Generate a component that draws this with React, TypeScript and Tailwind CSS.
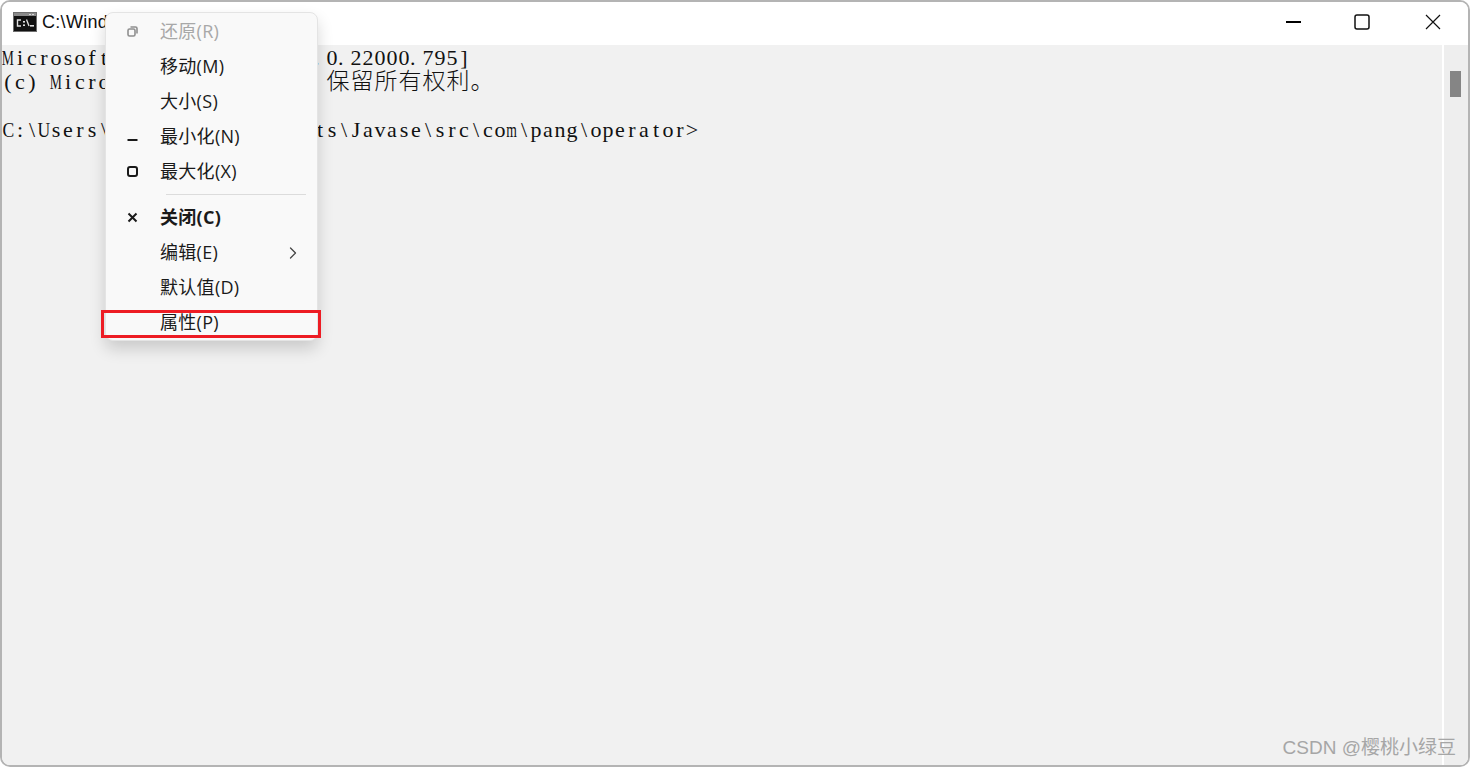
import { ReactNode } from "react";
import { ChevronRight } from "lucide-react";

const uiFont = "'Open Sans', 'Noto Sans CJK SC', sans-serif";

// console text sits on a fixed 12px grid, CJK glyphs take two cells
function ConsoleLine({ text }: { text: string }) {
  return (
    <div className="flex h-[24px] whitespace-pre font-['Liberation_Serif','Noto_Sans_CJK_SC',serif] text-[22px] leading-[24px] text-[#111]">
      {Array.from(text).map((ch, i) => {
        if (ch.charCodeAt(0) > 255) {
          return (
            <span key={i} className="w-[24px] shrink-0 text-center text-[23px] font-light">
              {ch}
            </span>
          );
        }
        let squeeze = "";
        if ("MWmw".includes(ch)) squeeze = "scale-x-[0.62]";
        else if ("CUDAP".includes(ch)) squeeze = "scale-x-[0.8]";
        return (
          <span key={i} className={`flex w-[12px] shrink-0 ${ch === "." ? "justify-start" : "justify-center"}`}>
            <span className={`inline-block ${squeeze}`}>{ch}</span>
          </span>
        );
      })}
    </div>
  );
}

function MenuItem({
  label,
  icon,
  disabled,
  bold,
  arrow,
}: {
  label: string;
  icon?: ReactNode;
  disabled?: boolean;
  bold?: boolean;
  arrow?: boolean;
}) {
  return (
    <div
      className={`flex h-[35px] items-center text-[18px] ${disabled ? "text-[#a8a8a8]" : "text-[#1a1a1a]"} ${bold ? "font-bold" : ""}`}
    >
      <span className="flex w-[54px] shrink-0 items-center justify-center pr-[2px]">{icon}</span>
      <span className="mt-[-1px] flex-1 whitespace-nowrap tracking-[0.3px]">{label}</span>
      {arrow && <ChevronRight className="mr-[14px] h-[20px] w-[20px] text-[#444]" strokeWidth={1.5} />}
    </div>
  );
}

function Menu() {
  return (
    <div
      style={{ fontFamily: uiFont }}
      className="absolute left-[105px] top-[12px] h-[329px] w-[213px] rounded-[8px] border border-[#e4e4e4] bg-[#f9f9f9] pt-[1px] shadow-[0_8px_16px_rgba(0,0,0,0.16)]"
    >
      <MenuItem
        label="还原(R)"
        disabled
        icon={
          <svg width="11" height="11" viewBox="0 0 11 11" fill="none" stroke="#8f8f8f" strokeWidth="1.6">
            <rect x="1" y="3" width="7" height="7" rx="1.5" />
            <path d="M3.5 1h5a1.5 1.5 0 0 1 1.5 1.5v5" />
          </svg>
        }
      />
      <MenuItem label="移动(M)" />
      <MenuItem label="大小(S)" />
      <MenuItem
        label="最小化(N)"
        icon={
          <svg width="11" height="11" viewBox="0 0 11 11" fill="none" stroke="#1a1a1a" strokeWidth="2">
            <path d="M0.5 9h10" />
          </svg>
        }
      />
      <MenuItem
        label="最大化(X)"
        icon={
          <svg width="11" height="11" viewBox="0 0 11 11" fill="none" stroke="#1a1a1a" strokeWidth="2">
            <rect x="1" y="1" width="9" height="9" rx="2" />
          </svg>
        }
      />
      <div className="ml-[60px] mr-[11px] mt-[5px] mb-[5px] h-px bg-[#dcdcdc]" />
      <MenuItem
        label="关闭(C)"
        bold
        icon={
          <svg width="11" height="11" viewBox="0 0 11 11" fill="none" stroke="#1a1a1a" strokeWidth="2">
            <path d="M1.5 1.5l8 8M9.5 1.5l-8 8" />
          </svg>
        }
      />
      <MenuItem label="编辑(E)" arrow />
      <MenuItem label="默认值(D)" />
      <MenuItem label="属性(P)" />
      <div className="absolute left-[-5px] top-[297px] h-[28px] w-[220px] border-[3px] border-[#ed1c24]" />
    </div>
  );
}

export default function App() {
  return (
    <div className="relative h-[767px] w-[1470px] overflow-hidden bg-white">
      <div className="flex h-full flex-col overflow-hidden rounded-[10px] border-2 border-[#b4b4b4] bg-white">
        <div className="flex h-[43px] shrink-0 items-center bg-white pb-[3px]">
          <svg width="24" height="20" viewBox="0 0 24 20" className="ml-[11px] shrink-0">
            <rect width="24" height="20" fill="#6e6e6e" />
            <rect x="1" y="1" width="22" height="3" fill="#8a8a8a" />
            <rect x="16" y="2" width="2" height="1" fill="#d8d8d8" />
            <rect x="19" y="2" width="2" height="1" fill="#d8d8d8" />
            <rect x="1" y="4" width="22" height="15" fill="#111" />
            <path d="M8 8H4.5v6H8" fill="none" stroke="#e0e0e0" strokeWidth="1.4" />
            <rect x="10" y="9" width="2" height="1.6" fill="#e0e0e0" />
            <rect x="10" y="12.4" width="2" height="1.6" fill="#e0e0e0" />
            <path d="M13.5 7.5l2.5 6.5" stroke="#e0e0e0" strokeWidth="1.3" />
            <rect x="17" y="13" width="4" height="1.6" fill="#e0e0e0" />
          </svg>
          <span
            style={{ fontFamily: "'Liberation Sans', sans-serif" }}
            className="ml-[5px] flex-1 text-[18px] tracking-[0.3px] text-[#111]"
          >
            C:\Windows\System32\cmd.exe
          </span>
          <div className="flex h-full items-center">
            <div className="mr-[53px] h-[1.5px] w-[15px] bg-black" />
            <svg width="16" height="16" viewBox="0 0 16 16" fill="none" stroke="#111" strokeWidth="1.5" className="mr-[55px]">
              <rect x="1" y="1" width="14" height="14" rx="2" />
            </svg>
            <svg width="16" height="16" viewBox="0 0 16 16" fill="none" stroke="#111" strokeWidth="1.2" className="mr-[27px]">
              <path d="M1 1l14 14M15 1L1 15" />
            </svg>
          </div>
        </div>
        <div className="flex min-h-0 flex-1 bg-[#f1f1f1]">
          <div className="flex-1 pt-[1px]">
            <ConsoleLine text="Microsoft Windows [版本 10.0.22000.795]" />
            <ConsoleLine text="(c) Microsoft Corporation。保留所有权利。" />
            <div className="h-[24px]" />
            <ConsoleLine text="C:\Users\Vicky1234\Documents\Javase\src\com\pang\operator>" />
          </div>
          <div className="w-[26px] shrink-0 border-l-2 border-white bg-[#eeeeee] pl-[6px] pt-[26px]">
            <div className="h-[26px] w-[11px] bg-[#858585]" />
          </div>
        </div>
      </div>
      <Menu />
      <div
        style={{ fontFamily: "'Liberation Sans', 'Noto Sans CJK SC', sans-serif" }}
        className="absolute bottom-[5px] right-[14px] text-[19px] text-[#a6a6a6]"
      >
        CSDN @樱桃小绿豆
      </div>
    </div>
  );
}
